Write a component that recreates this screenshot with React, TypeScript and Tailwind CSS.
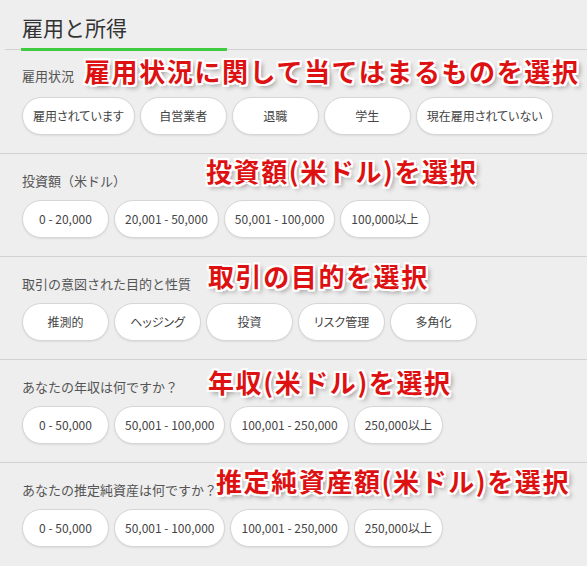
import React from "react";

type Section = {
  label: string;
  note: string;
  noteClass: string;
  options: string[];
};

const sections: Section[] = [
  {
    label: "雇用状況",
    note: "雇用状況に関して当てはまるものを選択",
    noteClass: "top-[8px] left-[84px]",
    options: ["雇用されています", "自営業者", "退職", "学生", "現在雇用されていない"],
  },
  {
    label: "投資額（米ドル）",
    note: "投資額(米ドル)を選択",
    noteClass: "top-[4px] left-[206px]",
    options: ["0 - 20,000", "20,001 - 50,000", "50,001 - 100,000", "100,000以上"],
  },
  {
    label: "取引の意図された目的と性質",
    note: "取引の目的を選択",
    noteClass: "top-[6px] left-[208px]",
    options: ["推測的", "ヘッジング", "投資", "リスク管理", "多角化"],
  },
  {
    label: "あなたの年収は何ですか？",
    note: "年収(米ドル)を選択",
    noteClass: "top-[9px] left-[208px]",
    options: ["0 - 50,000", "50,001 - 100,000", "100,001 - 250,000", "250,000以上"],
  },
  {
    label: "あなたの推定純資産は何ですか？",
    note: "推定純資産額(米ドル)を選択",
    noteClass: "top-[5px] left-[216px]",
    options: ["0 - 50,000", "50,001 - 100,000", "100,001 - 250,000", "250,000以上"],
  },
];

function Option({ text }: { text: string }) {
  return (
    <button className="h-[38px] min-w-[87px] px-[10px] rounded-full bg-white border border-[#d6d6d6] shadow-[0_1px_2px_rgba(0,0,0,0.08)] text-[12px] text-[#444] [font-feature-settings:'palt'] whitespace-nowrap">
      {text}
    </button>
  );
}

function App() {
  return (
    <div className="w-[587px] min-h-[566px] bg-[#eeeeee] overflow-hidden font-['Noto_Sans_CJK_JP','Noto_Sans',sans-serif]">
      <div className="relative ml-[5px] border-b border-[#d2d2d2] pl-[17px] pt-[13px] pb-[8px]">
        <h1 className="text-[21px] leading-[28px] text-[#333]">雇用と所得</h1>
        <div className="absolute left-[16px] bottom-[-2px] w-[206px] h-[3px] bg-[#3fcb3f]" />
      </div>

      {sections.map((s, i) => (
        <div
          key={s.label}
          className={
            "relative px-[22px] pb-[18px] " +
            (i === 0 ? "pt-[16px]" : "pt-[17px]") +
            (i < sections.length - 1 ? " border-b border-[#d2d2d2]" : "")
          }
        >
          <div className="text-[13px] leading-[20px] text-[#555]">{s.label}</div>
          <div className={"flex gap-[5px] " + (i === 0 ? "mt-[11px]" : "mt-[9px]")}>
            {s.options.map((o) => (
              <Option key={o} text={o} />
            ))}
          </div>
          <div
            className={
              "absolute whitespace-nowrap text-[26px] leading-[26px] font-bold tracking-[1.6px] text-[#dd1111] [text-shadow:-2px_-2px_0_#fff,2px_-2px_0_#fff,-2px_2px_0_#fff,2px_2px_0_#fff,0_-2px_0_#fff,0_2px_0_#fff,-2px_0_0_#fff,2px_0_0_#fff,3px_3px_5px_rgba(0,0,0,0.45)] " +
              s.noteClass
            }
          >
            {s.note}
          </div>
        </div>
      ))}
    </div>
  );
}

export default App;
